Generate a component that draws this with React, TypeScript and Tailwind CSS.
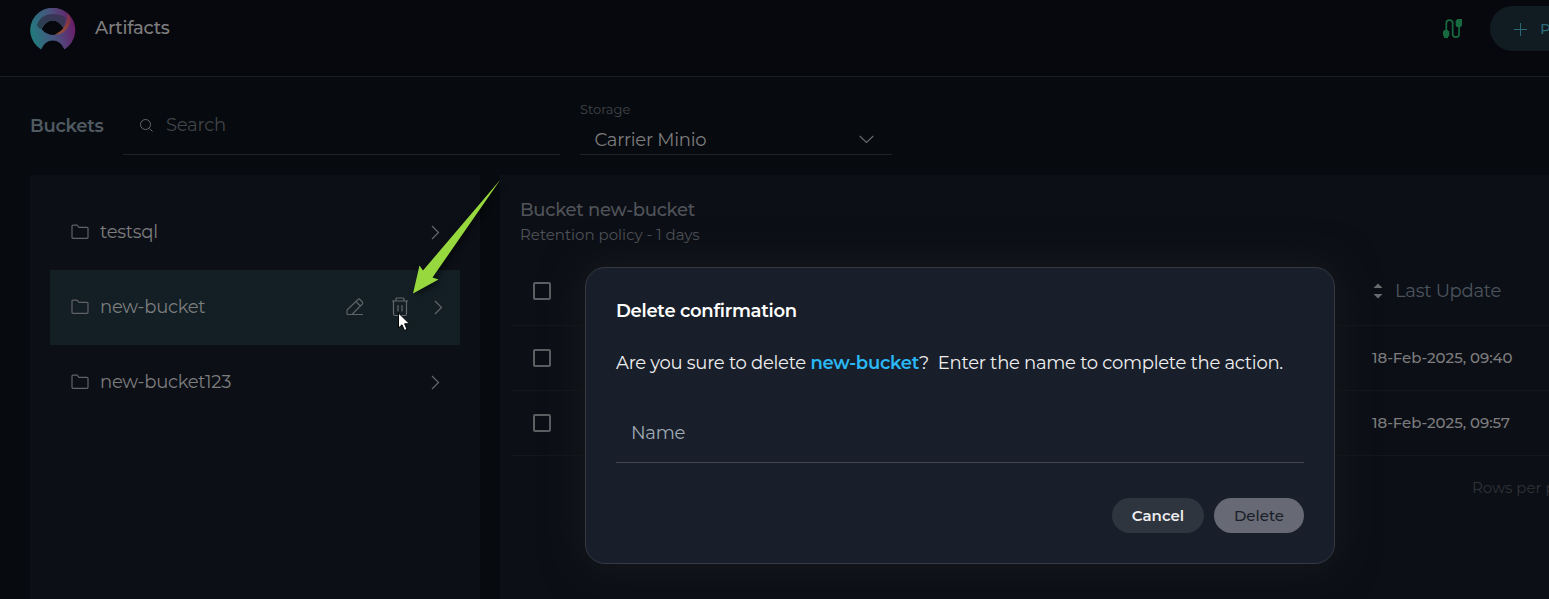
import React from "react";

function Folder() {
  return (
    <svg width="18" height="16" viewBox="0 0 18 16" fill="none" stroke="#606267" strokeWidth="1.2">
      <path d="M1 2.2Q1 1.2 2 1.2H6L8 3.3H16Q17 3.3 17 4.3V13.3Q17 14.3 16 14.3H2Q1 14.3 1 13.3Z" />
    </svg>
  );
}

function Chevron() {
  return (
    <svg width="9" height="15" viewBox="0 0 9 15" fill="none" stroke="#65676a" strokeWidth="1.2">
      <path d="M1 1L7.5 7.5L1 14" />
    </svg>
  );
}

function Logo() {
  return (
    <svg width="46" height="42" viewBox="0 0 46 42" className="mt-2">
      <defs>
        <linearGradient id="ring" x1="0" y1="0.6" x2="1" y2="0.4">
          <stop offset="0" stopColor="#207b7d" />
          <stop offset="0.5" stopColor="#49547f" />
          <stop offset="1" stopColor="#6b1a68" />
        </linearGradient>
        <linearGradient id="shade" x1="0" y1="1" x2="1" y2="0">
          <stop offset="0" stopColor="#24454f" />
          <stop offset="1" stopColor="#422f58" />
        </linearGradient>
        <linearGradient id="flare" x1="1" y1="0" x2="0" y2="1">
          <stop offset="0" stopColor="#7b2947" />
          <stop offset="1" stopColor="#9a5a30" />
        </linearGradient>
      </defs>
      <path fill="url(#ring)" fillRule="evenodd" d="M11 40.800A22.500 22.500 0 1 1 34.500 40.800Q30.500 32 22.700 32Q15.200 32 11 40.800ZM11.500 20.500Q16 26.300 23 26.300Q30 26.300 33.500 20Q29 12 22.500 12Q16 12 11.500 20.500Z" transform="translate(0 .6)" />
      <path fill="url(#shade)" d="M6.800 17Q11 6 22.500 6Q31 6 35.800 9.500L34 20.500Q29 12.500 22.500 12.500Q16 12.500 11.500 21Q8 20 6.800 17Z" />
      <path fill="url(#flare)" d="M37.500 4.500Q42 11 40 15.500Q35.500 26.700 24.500 26.700Q38 21 37.500 4.500Z" />
    </svg>
  );
}

const buckets = ["testsql", "new-bucket", "new-bucket123"];

const rows = ["18-Feb-2025, 09:40", "18-Feb-2025, 09:57"];

function Checkbox() {
  return <span className="ml-[21px] block size-[18px] rounded-[2px] border-2 border-[#5d5f62]" />;
}

export default function App() {
  return (
    <div className="relative flex h-[599px] w-[1549px] flex-col overflow-hidden bg-[#070a0e] font-['Montserrat','Inter',sans-serif] text-[18px] tracking-[-0.28px] whitespace-nowrap text-[#7d7d7e]">
      <header className="flex h-[77px] shrink-0 border-b border-[#1c1e22] bg-[#07080d] pl-[30px]">
        <Logo />
        <h1 className="mt-3.5 ml-[19px] h-7 leading-7 font-medium">Artifacts</h1>
        <svg width="20" height="20" viewBox="0 0 20 20" fill="none" className="mt-[19px] ml-auto shrink-0">
          <path d="M3.300 13V4.300A3.200 3.200 0 0 1 9.700 4.300V14.900A3.200 3.200 0 0 0 16.100 14.900V7" stroke="#17693f" strokeWidth="1.7" />
          <path d="M1.500 11H5V12H6.300V16.500L5 18V19H1V17.500L0 16.500V12.500ZM14.300 0H19V6.500L17.800 8H14L12.700 7V2Z" fill="#17693f" />
        </svg>
        <button className="mt-1.5 ml-[27px] flex h-[45px] w-[59px] shrink-0 items-center overflow-hidden rounded-l-full bg-[#101c22] pt-px pl-6 text-[15px] font-medium text-[#2a6874]">
          <svg width="13" height="13" viewBox="0 0 13 13" stroke="currentColor" className="shrink-0"><path d="M6.500 0V13M0 6.500H13" /></svg>
          <span className="ml-[13px]">P</span>
        </button>
      </header>

      <section className="flex h-[98px] shrink-0 pl-[30px]">
        <h2 className="mt-[35px] w-[93px] leading-7 font-semibold text-[#505a63]">Buckets</h2>
        <div className="flex h-[78px] w-[437px] border-b border-[#202326] pl-4 text-[#404347]">
          <svg width="15" height="15" viewBox="0 0 15 15" fill="none" stroke="#66696c" className="mt-[41px]"><circle cx="6.500" cy="6.500" r="5" /><path d="M10.500 10.500L13.500 13.500" /></svg>
          <span className="mt-[34px] ml-3 leading-7">Search</span>
        </div>
        <div className="ml-5 flex h-[78px] w-[312px] flex-col border-b border-[#202326]">
          <span className="mt-[22px] text-[13px] leading-5 tracking-normal text-[#42454a]">Storage</span>
          <div className="mt-[7px] flex items-center justify-between pr-[18px] pl-[14.5px] leading-7">
            <span>Carrier Minio</span>
            <svg width="15" height="9" viewBox="0 0 15 9" fill="none" stroke="#66696c" strokeWidth="1.200" className="-mt-px"><path d="M.7 1L7.500 7.500L14.300 1" /></svg>
          </div>
        </div>
      </section>

      <main className="flex min-h-0 flex-1 gap-5 pl-[30px]">
        <aside className="w-[450px] bg-[#0c0f16] px-5 pt-5">
          {buckets.map((name, i) => (
            <div key={name} className={i === 1 ? "flex h-[75px] items-center bg-[#131f25] pr-[17px] pb-px pl-[21px]" : "flex h-[75px] items-center pr-5 pb-px pl-[21px]"}>
              <Folder />
              <span className="ml-[11px] pb-px leading-7">{name}</span>
              <span className="ml-auto flex items-center">
                {i === 1 && (
                  <>
                    <svg width="18" height="18" viewBox="0 0 18 18" fill="none" stroke="#5c6266" strokeWidth="1.200" className="mr-[27px]">
                      <path d="M1 16.500V12L12 1.500Q13 .5 14 1.500L16.300 4Q17.200 5 16.300 6L6 16.500M1 16.500H17M10 3.500L14.200 8" />
                    </svg>
                    <svg width="18" height="20" viewBox="0 0 18 20" fill="none" stroke="#62686b" strokeWidth="1.200" className="mr-[25px]">
                      <path d="M1 4H17M5 4V2Q5 1 6 1H12Q13 1 13 2V4M2.500 4V17Q2.500 18.500 4 18.500H14Q15.500 18.500 15.500 17V4M7 8V14.500M11 8V14.500" />
                    </svg>
                  </>
                )}
                <Chevron />
              </span>
            </div>
          ))}
        </aside>
        <section className="min-w-0 flex-1 overflow-hidden bg-[#0c0f16]">
          <h3 className="mt-[21px] ml-5 leading-7 font-medium text-[#505359]">Bucket new-bucket</h3>
          <p className="ml-5 text-[15px] leading-[22px] tracking-normal text-[#505359]">Retention policy - 1 days</p>
          <div className="mt-[9px] ml-3">
            <div className="flex h-[71px] items-center border-b border-[#141719] pt-0.5 text-[#4b545d]">
              <Checkbox />
              <span className="ml-[822px] flex items-center">
                <svg width="10" height="16" viewBox="0 0 10 16" fill="#6a6c6f"><path d="M.5 5L5 .5L9.500 5ZM.5 11H9.500L5 15.500Z" /></svg>
                <span className="ml-3">Last Update</span>
              </span>
            </div>
            {rows.map((r) => (
              <div key={r} className="flex h-[65px] items-center border-b border-[#141719]">
                <Checkbox />
                <span className="ml-[821px] text-[15px] font-medium tracking-[-0.04px]">{r}</span>
              </div>
            ))}
            <p className="ml-[960px] text-[15px] leading-[64px] tracking-normal text-[#303236]">Rows per page</p>
          </div>
        </section>
      </main>

      <div className="absolute top-[267px] left-[585px] flex h-[297px] w-[750px] flex-col rounded-[20px] border border-[#353943] bg-[#191f2a] px-[30px] text-[#eeeeef] shadow-[0_0_38px_4px_#16191c]">
        <h2 className="mt-[29px] leading-7 font-semibold text-white">Delete confirmation</h2>
        <p className="mt-6 leading-7">
          Are you sure to delete <span className="font-semibold text-[#29b8f5]">new-bucket</span>?&nbsp; Enter the name to complete the action.
        </p>
        <div className="mt-8 h-[54px] border-b border-[#41454e] pt-2.5 pl-[15px] leading-7 text-[#9faab5]">Name</div>
        <div className="mt-[35px] flex justify-end gap-2.5 text-[15px] tracking-normal">
          <button className="h-[35px] w-[92px] rounded-full bg-[#2e353f] pt-0.5 font-semibold">Cancel</button>
          <button className="h-[35px] w-[90px] rounded-full bg-[#676a74] pt-0.5 font-medium text-[#1a1f2a]">Delete</button>
        </div>
      </div>

      <svg className="absolute top-[175px] left-[405px] drop-shadow-[2px_3px_3px_#00000080]" width="104" height="125" viewBox="0 0 104 125">
        <path d="M95.500 4.500L27.500 102.500L33.500 104.500L8 118.500L14.500 90.500L18 95.500Z" fill="#97d83f" />
      </svg>
      <svg className="absolute top-[312px] left-[397px]" width="14" height="20" viewBox="0 0 14 20">
        <path d="M1.500 1V16L5 12.800L7.500 18.500L10 17.300L7.600 11.800H12.500Z" fill="#fff" stroke="#000" />
      </svg>
    </div>
  );
}
